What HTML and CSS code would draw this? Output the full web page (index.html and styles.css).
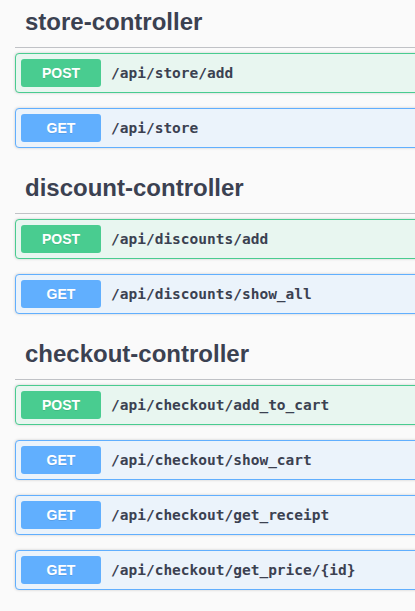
FILE: index.html
```html
<!DOCTYPE html>
<html>
<head>
<meta charset="utf-8">
<link rel="stylesheet" href="styles.css">
</head>
<body>
<div class="wrapper">
  <section class="tag-section">
    <h3 class="tag">store-controller</h3>
    <div class="opblock post"><span class="method">POST</span><span class="path">/api/store/add</span></div>
    <div class="opblock get"><span class="method">GET</span><span class="path">/api/store</span></div>
  </section>
  <section class="tag-section">
    <h3 class="tag">discount-controller</h3>
    <div class="opblock post"><span class="method">POST</span><span class="path">/api/discounts/add</span></div>
    <div class="opblock get"><span class="method">GET</span><span class="path">/api/discounts/show_all</span></div>
  </section>
  <section class="tag-section">
    <h3 class="tag">checkout-controller</h3>
    <div class="opblock post"><span class="method">POST</span><span class="path">/api/checkout/add_to_cart</span></div>
    <div class="opblock get"><span class="method">GET</span><span class="path">/api/checkout/show_cart</span></div>
    <div class="opblock get"><span class="method">GET</span><span class="path">/api/checkout/get_receipt</span></div>
    <div class="opblock get"><span class="method">GET</span><span class="path">/api/checkout/get_price/{id}</span></div>
  </section>
</div>
</body>
</html>
```

FILE: styles.css
```css
html, body {
  margin: 0;
  padding: 0;
  background: #fafafa;
  overflow: hidden;
}
body {
  width: 415px;
  height: 611px;
}
.wrapper {
  margin-top: -3px;
  padding-left: 15px;
  width: 540px;
}
.tag {
  margin: 0 0 5px 0;
  padding: 10px 20px 10px 10px;
  font-family: "Liberation Sans", Arial, sans-serif;
  font-size: 24px;
  font-weight: 700;
  line-height: 30px;
  color: #3b4151;
  border-bottom: 1px solid rgba(59, 65, 81, 0.3);
}
.opblock {
  display: flex;
  align-items: center;
  padding: 5px;
  margin: 0 0 15px 0;
  border: 1px solid;
  border-radius: 4px;
  box-shadow: 0 0 3px rgba(0, 0, 0, 0.19);
}
.opblock.post {
  background: #e8f6f0;
  border-color: #49cc90;
}
.opblock.get {
  background: #ebf3fb;
  border-color: #61affe;
}
.method {
  width: 80px;
  height: 28px;
  line-height: 28px;
  text-align: center;
  border-radius: 3px;
  color: #fff;
  font-family: "Liberation Sans", Arial, sans-serif;
  font-size: 14px;
  font-weight: 700;
  text-shadow: 0 1px 0 rgba(0, 0, 0, 0.1);
}
.post .method { background: #49cc90; }
.get .method { background: #61affe; }
.path {
  padding: 0 10px;
  font-family: "DejaVu Sans Mono", "Liberation Mono", monospace;
  font-size: 14.5px;
  font-weight: 700;
  color: #3b4151;
}
```
